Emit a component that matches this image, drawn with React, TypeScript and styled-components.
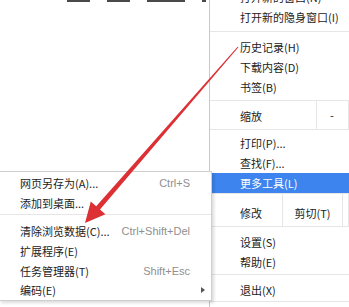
import React from "react";
import styled, { createGlobalStyle } from "styled-components";

const GlobalStyle = createGlobalStyle`
  html, body {
    margin: 0;
    padding: 0;
    background: #fff;
  }
  body {
    font-family: "Noto Sans CJK SC", "Noto Sans", "Liberation Sans", sans-serif;
    font-size: 11px;
    color: #222;
  }
`;

const Screen = styled.div`
  position: relative;
  display: flex;
  width: 349px;
  height: 307px;
  overflow: hidden;
  background: #fff;
`;

const PageArea = styled.div`
  width: 209px;
  flex-shrink: 0;
`;

const Crumbs = styled.div`
  display: flex;
  gap: 17px;
  padding-left: 67px;
`;

const Crumb = styled.span<{ $w: number }>`
  display: block;
  width: ${(p) => p.$w}px;
  height: 2px;
  background: #4a4a4a;
`;

const MainMenu = styled.div`
  flex: 1;
  border-left: 1px solid #c9c9c9;
  margin-top: -13px;
  white-space: nowrap;
`;

const Item = styled.div<{ $active?: boolean }>`
  height: 20px;
  line-height: 20px;
  padding-left: 30px;
  background: ${(p) => (p.$active ? "#3d84ee" : "transparent")};
  color: ${(p) => (p.$active ? "#fff" : "#222")};
`;

const Separator = styled.div<{ $above?: number; $below?: number }>`
  height: 1px;
  background: #e6e6e6;
  margin: ${(p) => p.$above ?? 4}px 0 ${(p) => p.$below ?? 5}px;
`;

const CellRow = styled.div<{ $cols: string; $height: number; $above: number; $below: number }>`
  display: grid;
  grid-template-columns: ${(p) => p.$cols};
  height: ${(p) => p.$height}px;
  border-top: 1px solid #e6e6e6;
  border-bottom: 1px solid #e6e6e6;
  margin: ${(p) => p.$above}px 0 ${(p) => p.$below}px;
`;

const Cell = styled.div<{ $center?: boolean; $pad?: number; $top: number }>`
  border-right: 1px solid #e6e6e6;
  padding-left: ${(p) => p.$pad ?? 0}px;
  padding-top: ${(p) => p.$top}px;
  line-height: 20px;
  text-align: ${(p) => (p.$center ? "center" : "left")};
`;

const SubMenu = styled.div`
  position: absolute;
  top: 171px;
  left: -1px;
  width: 211px;
  padding: 1px 0 0;
  background: #fff;
  border: 1px solid #cfcfcf;
  box-shadow: 2px 2px 3px rgba(0, 0, 0, 0.14);
  white-space: nowrap;
`;

const SubItem = styled.div`
  display: grid;
  grid-template-columns: 1fr auto 21px;
  align-items: center;
  height: 19.7px;
  padding-left: 20px;
`;

const Shortcut = styled.span`
  color: #8f8f8f;
  font-family: "Liberation Sans", "Noto Sans", sans-serif;
  font-size: 11px;
`;

const SubArrow = styled.span`
  justify-self: end;
  margin-right: 6px;
  width: 0;
  height: 0;
  border-top: 3px solid transparent;
  border-bottom: 3px solid transparent;
  border-left: 4px solid #555;
`;

const Overlay = styled.svg`
  position: absolute;
  left: 0;
  top: 0;
  pointer-events: none;
`;

type SubEntry = { label: string; key?: string; more?: boolean } | "sep";

const subEntries: SubEntry[] = [
  { label: "网页另存为(A)...", key: "Ctrl+S" },
  { label: "添加到桌面..." },
  "sep",
  { label: "清除浏览数据(C)...", key: "Ctrl+Shift+Del" },
  { label: "扩展程序(E)" },
  { label: "任务管理器(T)", key: "Shift+Esc" },
  { label: "编码(E)", more: true },
];

const App: React.FC = () => (
  <>
    <GlobalStyle />
    <Screen>
      <PageArea>
        <Crumbs>
          <Crumb $w={23} />
          <Crumb $w={23} />
          <Crumb $w={38} />
          <Crumb $w={4} />
        </Crumbs>
      </PageArea>

      <MainMenu>
        <Item>打开新的窗口(N)</Item>
        <Item>打开新的隐身窗口(I)</Item>
        <Separator />
        <Item>历史记录(H)</Item>
        <Item>下载内容(D)</Item>
        <Item>书签(B)</Item>
        <CellRow $cols="107px 1fr" $height={28} $above={3} $below={3}>
          <Cell $pad={30} $top={5}>缩放</Cell>
          <Cell $pad={13} $top={4}>-</Cell>
        </CellRow>
        <Item>打印(P)...</Item>
        <Item>查找(F)...</Item>
        <Item $active>更多工具(L)</Item>
        <CellRow $cols="73px 60px 1fr" $height={32} $above={0} $below={5}>
          <Cell $pad={30} $top={9}>修改</Cell>
          <Cell $center $top={9}>剪切(T)</Cell>
          <Cell $top={9} />
        </CellRow>
        <Item>设置(S)</Item>
        <Item>帮助(E)</Item>
        <Separator $above={2} $below={5} />
        <Item>退出(X)</Item>
        <Separator $above={1} $below={0} />
      </MainMenu>

      <SubMenu>
        {subEntries.map((e, i) =>
          e === "sep" ? (
            <Separator key={i} $above={2} $below={6} />
          ) : (
            <SubItem key={i}>
              <span>{e.label}</span>
              <Shortcut>{e.key ?? ""}</Shortcut>
              {e.more ? <SubArrow /> : <span />}
            </SubItem>
          )
        )}
      </SubMenu>

      <Overlay width="349" height="307" viewBox="0 0 349 307">
        <polygon
          points="238.4,47.3 100,209.5 105.4,214.3 85,223 90.8,201.5 96.2,206.3 237.6,46.7"
          fill="#dc3035"
        />
      </Overlay>
    </Screen>
  </>
);

export default App;
